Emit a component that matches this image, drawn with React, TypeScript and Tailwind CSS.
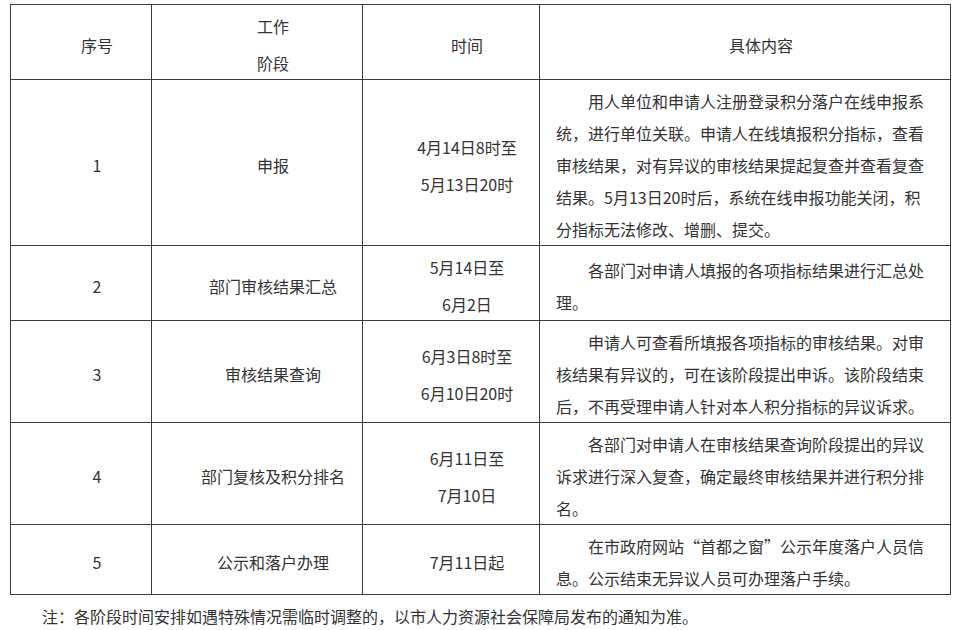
import React from "react";

const font = { fontFamily: '"Noto Sans CJK SC", "Noto Sans", sans-serif' };

type Row = { no: string; stage: string; time: string[]; content: string[] };

const rows: Row[] = [
  {
    no: "1",
    stage: "申报",
    time: ["4月14日8时至", "5月13日20时"],
    content: [
      "用人单位和申请人注册登录积分落户在线申报系",
      "统，进行单位关联。申请人在线填报积分指标，查看",
      "审核结果，对有异议的审核结果提起复查并查看复查",
      "结果。5月13日20时后，系统在线申报功能关闭，积",
      "分指标无法修改、增删、提交。",
    ],
  },
  {
    no: "2",
    stage: "部门审核结果汇总",
    time: ["5月14日至", "6月2日"],
    content: ["各部门对申请人填报的各项指标结果进行汇总处", "理。"],
  },
  {
    no: "3",
    stage: "审核结果查询",
    time: ["6月3日8时至", "6月10日20时"],
    content: [
      "申请人可查看所填报各项指标的审核结果。对审",
      "核结果有异议的，可在该阶段提出申诉。该阶段结束",
      "后，不再受理申请人针对本人积分指标的异议诉求。",
    ],
  },
  {
    no: "4",
    stage: "部门复核及积分排名",
    time: ["6月11日至", "7月10日"],
    content: [
      "各部门对申请人在审核结果查询阶段提出的异议",
      "诉求进行深入复查，确定最终审核结果并进行积分排",
      "名。",
    ],
  },
  {
    no: "5",
    stage: "公示和落户办理",
    time: ["7月11日起"],
    content: ["在市政府网站“首都之窗”公示年度落户人员信", "息。公示结束无异议人员可办理落户手续。"],
  },
];

function Paras({ lines }: { lines: string[] }) {
  return (
    <div className="flex flex-col gap-[5px]">
      {lines.map((l, i) => (
        <p key={i} className="indent-8 leading-[32px] whitespace-nowrap">
          {l}
        </p>
      ))}
    </div>
  );
}

export default function App() {
  const cellC = "border border-[#3c3c3c] text-center align-middle pt-[5px] pb-0 px-0";
  return (
    <div className="bg-white w-[958px] h-[630px] px-[10px] pt-[4px] text-[#333] text-[16px]" style={font}>
      <table className="w-[940px] table-fixed border-collapse">
        <colgroup>
          <col className="w-[141px]" />
          <col className="w-[211px]" />
          <col className="w-[177px]" />
          <col className="w-[411px]" />
        </colgroup>
        <tbody>
          <tr>
            <td className={cellC}>
              <Paras lines={["序号"]} />
            </td>
            <td className={cellC}>
              <Paras lines={["工作", "阶段"]} />
            </td>
            <td className={cellC}>
              <Paras lines={["时间"]} />
            </td>
            <td className={cellC}>
              <Paras lines={["具体内容"]} />
            </td>
          </tr>
          {rows.map((r) => (
            <tr key={r.no}>
              <td className={cellC}>
                <Paras lines={[r.no]} />
              </td>
              <td className={cellC}>
                <Paras lines={[r.stage]} />
              </td>
              <td className={cellC}>
                <Paras lines={r.time} />
              </td>
              <td className="border border-[#3c3c3c] align-middle pt-[5px] pb-0 px-[16px] text-left">
                <p className="indent-8 leading-[32px] whitespace-nowrap">
                  {r.content.map((l, i) => (
                    <React.Fragment key={i}>
                      {i > 0 && <br />}
                      {l}
                    </React.Fragment>
                  ))}
                </p>
              </td>
            </tr>
          ))}
        </tbody>
      </table>
      <p className="indent-8 leading-[32px] pt-[5px] whitespace-nowrap">
        注：各阶段时间安排如遇特殊情况需临时调整的，以市人力资源社会保障局发布的通知为准。
      </p>
    </div>
  );
}
